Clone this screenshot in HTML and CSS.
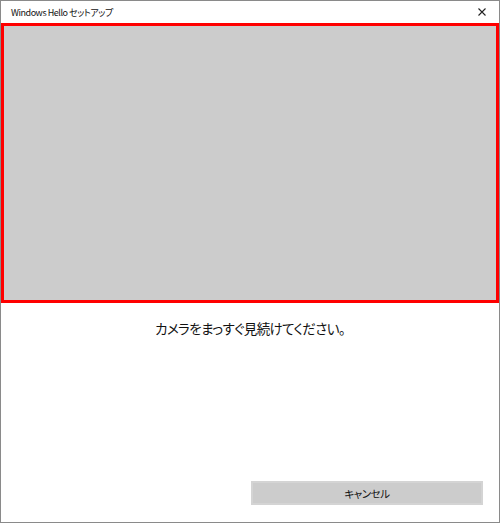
FILE: index.html
```html
<!DOCTYPE html>
<html lang="ja">
<head>
<meta charset="utf-8">
<link rel="stylesheet" href="styles.css">
</head>
<body>
<div class="window">
  <div class="titlebar">
    <span class="title">Windows Hello セットアップ</span>
    <svg class="close" width="10" height="10" viewBox="0 0 10 10"><path d="M1.5 1.5 L8.5 8.5 M8.5 1.5 L1.5 8.5" stroke="#222" stroke-width="1.1"/></svg>
  </div>
  <div class="camera"></div>
  <p class="message">カメラをまっすぐ見続けてください。</p>
  <div class="spacer"></div>
  <div class="actions">
    <button class="cancel">キャンセル</button>
  </div>
</div>
</body>
</html>
```

FILE: styles.css
```css
html, body {
  margin: 0;
  padding: 0;
  background: #fff;
}
body {
  font-family: "Noto Sans CJK JP", "Noto Sans", sans-serif;
  font-feature-settings: "palt";
}
.window {
  width: 500px;
  height: 523px;
  box-sizing: border-box;
  border: 1px solid #8a8a8a;
  display: flex;
  flex-direction: column;
}
.titlebar {
  height: 22px;
  display: flex;
  align-items: center;
  justify-content: space-between;
  padding: 0 10px 0 10px;
}
.title {
  font-size: 9px;
  color: #111;
  letter-spacing: -0.45px;
}
.close {
  margin-right: 2px;
}
.camera {
  height: 280px;
  box-sizing: border-box;
  border: 3px solid #ff0000;
  background: #cccccc;
}
.message {
  margin: 15px 0 0;
  text-align: center;
  font-size: 13.5px;
  color: #111;
  line-height: 20px;
  letter-spacing: -0.6px;
}
.spacer {
  flex: 1;
}
.actions {
  display: flex;
  justify-content: flex-end;
  padding: 0 16px 17px 0;
}
.cancel {
  width: 232px;
  height: 24px;
  border: 2px solid #d4d4d4;
  background: #cccccc;
  font-family: "Noto Sans CJK JP", sans-serif;
  font-feature-settings: "palt";
  font-size: 10.5px;
  letter-spacing: -0.5px;
  color: #111;
  padding: 0;
}
```
